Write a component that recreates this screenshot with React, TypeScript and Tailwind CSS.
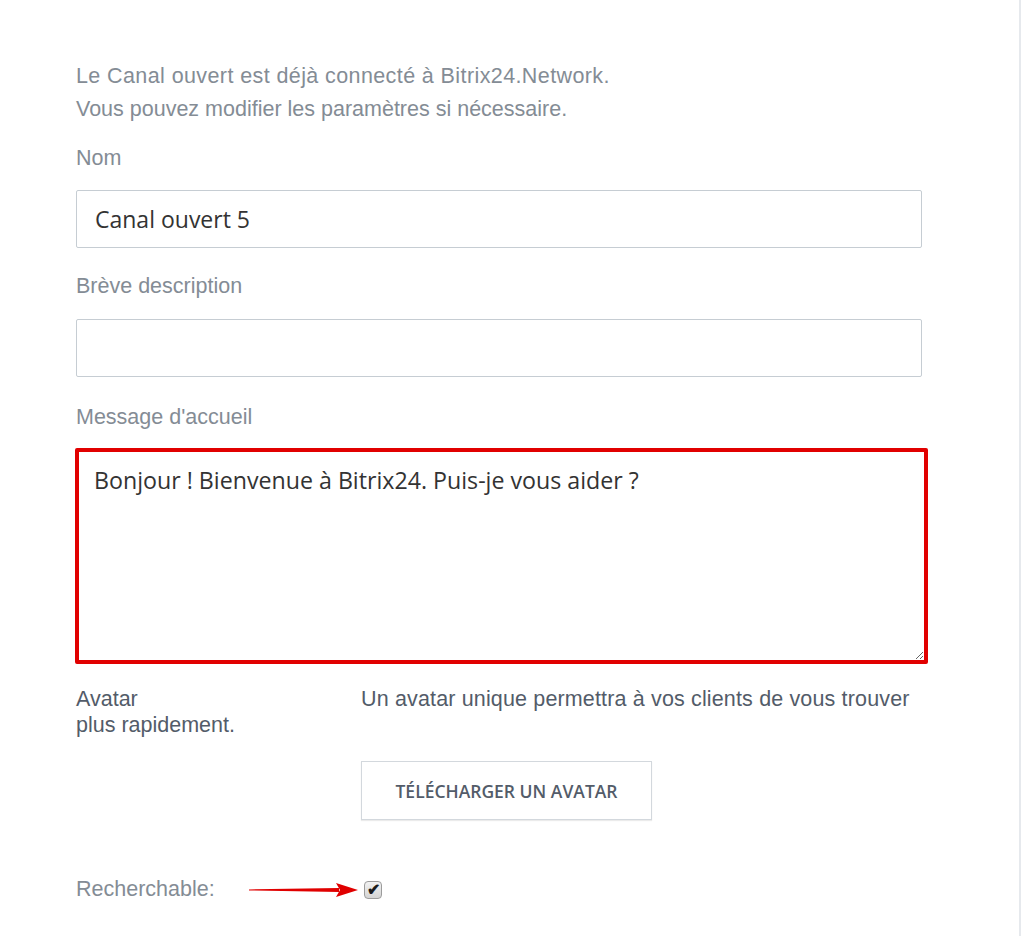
import React from 'react'

function Arrow() {
  return (
    <svg width="110" height="18" viewBox="0 0 110 18" className="block">
      <path d="M0 8.4 L90 7 L90 11 L0 9.4 Z" fill="#e00000" />
      <path d="M87 2 L109 9 L87 16 L91 9 Z" fill="#e00000" />
    </svg>
  )
}

function Checkbox() {
  return (
    <span className="flex h-[18px] w-[18px] items-center justify-center rounded-[4px] border border-[#9c9c9c] bg-gradient-to-b from-[#f2f2f2] to-[#d4d4d4] text-[16px] font-bold leading-none text-[#1a1a1a]">
      ✔
    </span>
  )
}

export default function App() {
  const label = 'text-[21.5px] leading-[33px] text-[#848c95]'
  const input =
    'block h-[58px] w-[846px] rounded-[2px] border border-[#c6cdd3] bg-white px-[18px] text-[23px] text-[#333] outline-none'

  return (
    <div
      className="relative min-h-[936px] w-[1024px] bg-white"
      style={{ fontFamily: '"Liberation Sans", Arial, sans-serif' }}
    >
      <div className="absolute right-[3px] top-0 h-full w-[2px] bg-[#e6e9ed]" />

      <div className="pl-[76px] pt-[60px]">
        <p className={label}>
          <span className="tracking-[0.4px]">Le Canal ouvert est déjà connecté à Bitrix24.Network.</span>
          <br />
          Vous pouvez modifier les paramètres si nécessaire.
        </p>

        <p className={`${label} mt-[16px]`}>Nom</p>
        <input
          className={`${input} mt-[15px]`}
          style={{ fontFamily: '"Open Sans", sans-serif' }}
          defaultValue="Canal ouvert 5"
        />

        <p className={`${label} mt-[22px]`}>Brève description</p>
        <input
          className={`${input} mt-[16px]`}
          style={{ fontFamily: '"Open Sans", sans-serif' }}
          defaultValue=""
        />

        <p className={`${label} mt-[24px]`}>Message d'accueil</p>
        <textarea
          className="-ml-px mt-[14px] block h-[216px] w-[853px] resize rounded-[2px] border-[4px] border-[#e10000] bg-white px-[15px] py-[12px] text-[23.2px] leading-[32px] text-[#333] outline-none"
          style={{ fontFamily: '"Open Sans", sans-serif' }}
          defaultValue="Bonjour ! Bienvenue à Bitrix24. Puis-je vous aider ?"
        />

        <div className="mt-[22px] flex text-[21.5px] leading-[26px] text-[#535c69]">
          <div className="w-[285px]">
            Avatar
            <br />
            plus rapidement.
          </div>
          <div>
            <p className="whitespace-nowrap tracking-[0.15px]">Un avatar unique permettra à vos clients de vous trouver</p>
            <button
              className="mt-[49px] h-[59px] w-[291px] border border-[#d3d8dd] bg-white text-[17.5px] font-semibold text-[#535c69] shadow-[0_1px_1px_rgba(0,0,0,0.08)]"
              style={{ fontFamily: '"Open Sans", sans-serif' }}
            >
              TÉLÉCHARGER UN AVATAR
            </button>
          </div>
        </div>

        <div className="mt-[53px] flex items-center">
          <span className="w-[173px] text-[21.5px] leading-[33px] text-[#848c95]">Recherchable:</span>
          <Arrow />
          <span className="ml-[5px] mt-[1px]">
            <Checkbox />
          </span>
        </div>
      </div>
    </div>
  )
}
